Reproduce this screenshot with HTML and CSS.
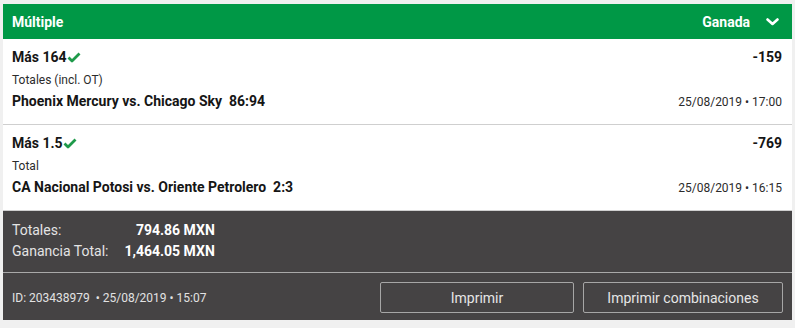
FILE: index.html
```html
<!DOCTYPE html>
<html lang="es">
<head>
<meta charset="utf-8">
<title>Múltiple</title>
<link rel="stylesheet" href="styles.css">
</head>
<body>
<div class="card">
  <div class="header">
    <span class="title">Múltiple</span>
    <span class="status">Ganada
      <svg class="chev" width="13" height="8" viewBox="0 0 13 8"><path d="M1.5 1.5 L6.5 6 L11.5 1.5" fill="none" stroke="#fff" stroke-width="2.6" stroke-linecap="round" stroke-linejoin="round"/></svg>
    </span>
  </div>
  <div class="sel">
    <div class="line top">
      <span class="pick">Más 164<svg class="check" width="14" height="11" viewBox="0 0 14 11"><path d="M1.5 5.5 L5 9 L12.5 1.5" fill="none" stroke="#1e9a4a" stroke-width="2.8" stroke-linejoin="round"/></svg></span>
      <span class="odds">-159</span>
    </div>
    <div class="market">Totales (incl. OT)</div>
    <div class="line">
      <span class="match">Phoenix Mercury vs. Chicago Sky&nbsp; 86:94</span>
      <span class="date">25/08/2019 • 17:00</span>
    </div>
  </div>
  <div class="sel">
    <div class="line top">
      <span class="pick">Más 1.5<svg class="check" width="14" height="11" viewBox="0 0 14 11"><path d="M1.5 5.5 L5 9 L12.5 1.5" fill="none" stroke="#1e9a4a" stroke-width="2.8" stroke-linejoin="round"/></svg></span>
      <span class="odds">-769</span>
    </div>
    <div class="market">Total</div>
    <div class="line">
      <span class="match">CA Nacional Potosi vs. Oriente Petrolero&nbsp; 2:3</span>
      <span class="date">25/08/2019 • 16:15</span>
    </div>
  </div>
  <div class="footer">
    <div class="totals">
      <span class="label">Totales:</span><span class="value">794.86 MXN</span>
      <span class="label">Ganancia Total:</span><span class="value">1,464.05 MXN</span>
    </div>
    <div class="actions">
      <span class="id">ID: 203438979 &nbsp;• 25/08/2019 • 15:07</span>
      <div class="buttons">
        <button class="btn btn-print">Imprimir</button>
        <button class="btn btn-comb">Imprimir combinaciones</button>
      </div>
    </div>
  </div>
</div>
</body>
</html>
```
FILE: styles.css
```css
html, body {
  margin: 0;
  padding: 0;
}
body {
  background: #f0f0f0;
  padding: 4px 3px 0 3px;
  font-family: Roboto, "Liberation Sans", Arial, sans-serif;
  color: #1b1b1b;
}
.card {
  background: #fff;
}
.header {
  height: 35px;
  background: #009846;
  color: #fff;
  display: flex;
  align-items: center;
  justify-content: space-between;
  padding: 0 13px 0 9px;
  font-weight: 700;
  font-size: 14px;
}
.header .title {
  padding-top: 1px;
}
.status {
  display: flex;
  align-items: center;
  gap: 16px;
}
.chev {
  display: block;
  margin-top: 1px;
}
.sel {
  padding: 8px 10px 12px 9px;
  border-bottom: 1px solid #cfcfcf;
}
.sel:last-of-type {
  border-bottom: none;
}
.line {
  display: flex;
  justify-content: space-between;
  align-items: baseline;
  line-height: 20px;
  margin-top: 3px;
}
.line.top {
  margin-top: 0;
}
.pick, .odds, .match {
  font-size: 14px;
  font-weight: 700;
  color: #151515;
}
.check {
  vertical-align: -1px;
  margin-left: 0;
}
.market {
  font-size: 12px;
  line-height: 16px;
  margin-top: 5px;
  color: #2b2b2b;
}
.date {
  font-size: 12px;
  color: #2b2b2b;
}
.footer {
  background: #454344;
  color: #e2e2e2;
}
.totals {
  display: grid;
  grid-template-columns: max-content max-content;
  column-gap: 16px;
  padding: 9px 9px 10px 9px;
  font-size: 14px;
  line-height: 21px;
  border-bottom: 1px solid #a9a9a9;
}
.totals .label {
  color: #e4e4e4;
}
.totals .value {
  justify-self: end;
  font-weight: 700;
  color: #fff;
}
.actions {
  display: flex;
  align-items: center;
  justify-content: space-between;
  padding: 9px 9px 7px 9px;
}
.id {
  font-size: 12px;
  color: #e2e2e2;
}
.buttons {
  display: flex;
  gap: 9px;
}
.btn {
  height: 31px;
  background: transparent;
  border: 1px solid #a6a6a6;
  border-radius: 2px;
  color: #e6e6e6;
  font-family: Roboto, "Liberation Sans", Arial, sans-serif;
  font-size: 14px;
  padding: 0;
}
.btn-print {
  width: 194px;
}
.btn-comb {
  width: 200px;
}
```
